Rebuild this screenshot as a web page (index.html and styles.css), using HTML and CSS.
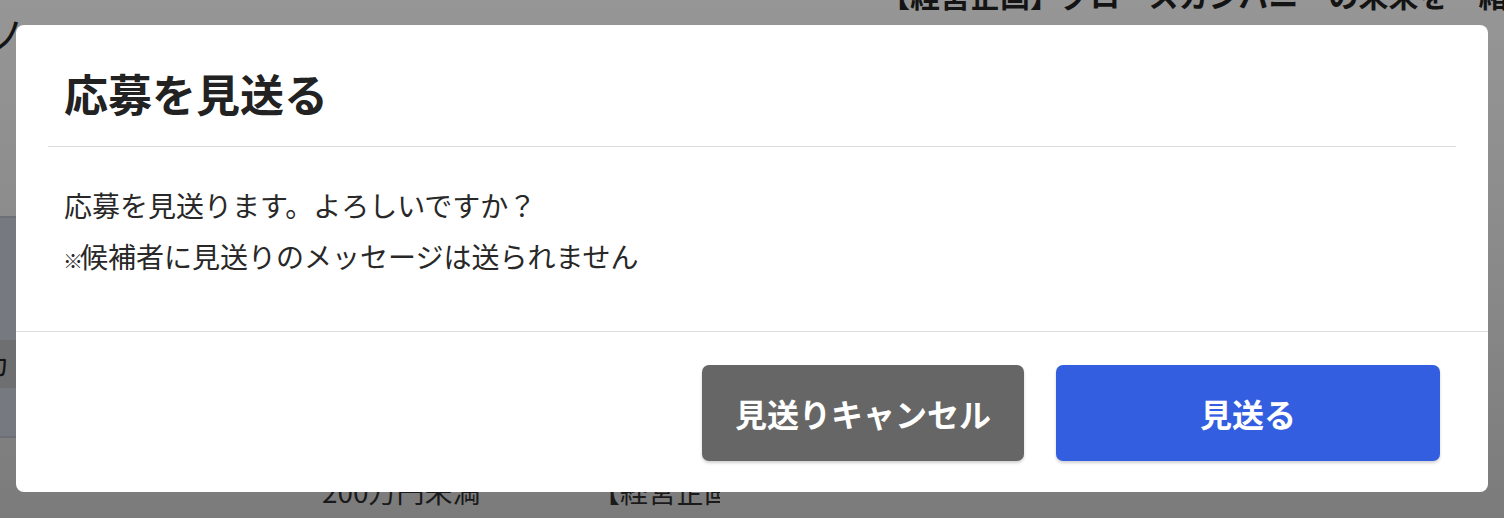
FILE: index.html
```html
<!DOCTYPE html>
<html lang="ja">
<head>
<meta charset="utf-8">
<title>応募を見送る</title>
<link rel="stylesheet" href="styles.css">
</head>
<body>
<div class="page">
  <div class="page-top">
    <span class="page-left-title">ノ</span>
    <span class="page-job-title">【経営企画】グロースカンパニーの未来を一緒に創る</span>
  </div>
  <div class="page-panel">
    <div class="panel-row">カ</div>
  </div>
  <div class="page-bottom">
    <span class="salary">200万円未満</span>
    <span class="job">【経営企画】</span>
  </div>
</div>

<div class="overlay">
  <div class="modal" role="dialog" aria-labelledby="modal-title">
    <div class="modal-header">
      <h2 id="modal-title" class="modal-title">応募を見送る</h2>
    </div>
    <div class="modal-body">
      <p class="modal-text">応募を見送ります。よろしいですか？</p>
      <p class="modal-text"><span class="note-mark">※</span>候補者に見送りのメッセージは送られません</p>
    </div>
    <div class="modal-footer">
      <button class="btn btn-cancel" type="button">見送りキャンセル</button>
      <button class="btn btn-primary" type="button">見送る</button>
    </div>
  </div>
</div>
</body>
</html>
```

FILE: styles.css
```css
* {
  box-sizing: border-box;
}

html, body {
  margin: 0;
  padding: 0;
  height: 100%;
}

body {
  width: 1504px;
  height: 518px;
  overflow: hidden;
  font-family: "Noto Sans CJK JP", "Noto Sans", sans-serif;
  background: linear-gradient(180deg, #969696 0%, #8a8a8a 50%, #7b7b7b 100%);
  color: #131313;
  position: relative;
}

/* dimmed page behind the dialog */
.page {
  height: 518px;
  display: flex;
  flex-direction: column;
}

.page-top {
  height: 216px;
  position: relative;
}

.page-left-title {
  position: absolute;
  left: -14px;
  top: 10px;
  font-size: 40px;
  line-height: 48px;
  color: #141414;
}

.page-job-title {
  position: absolute;
  left: 880px;
  top: -24px;
  font-size: 30px;
  font-weight: 700;
  line-height: 36px;
  color: #141414;
  white-space: nowrap;
}

.page-panel {
  height: 222px;
  width: 760px;
  background: #767a80;
  border-top: 2px solid #6c6f74;
  border-bottom: 2px solid #6c6f74;
  padding-top: 122px;
}

.panel-row {
  height: 48px;
  background: #6e6f70;
  font-size: 28px;
  line-height: 48px;
  margin-left: -18px;
  color: #141414;
}

.page-bottom {
  flex: 1;
  position: relative;
}

.salary {
  position: absolute;
  left: 322px;
  top: 36px;
  font-size: 28px;
  line-height: 34px;
  color: #1a1a1a;
}

.job {
  position: absolute;
  left: 592px;
  top: 36px;
  width: 128px;
  overflow: hidden;
  white-space: nowrap;
  font-size: 28px;
  line-height: 34px;
  color: #1a1a1a;
}

/* dialog */
.overlay {
  position: absolute;
  inset: 0;
  padding: 25px 16px 0;
}

.modal {
  width: 1472px;
  height: 467px;
  background: #ffffff;
  border-radius: 8px;
  display: flex;
  flex-direction: column;
  color: #222222;
}

.modal-header {
  margin: 0 32px;
  padding: 35px 16px 20px;
  border-bottom: 1px solid #dedede;
}

.modal-title {
  margin: 0;
  font-size: 44px;
  line-height: 66px;
  font-weight: 700;
  color: #222222;
}

.modal-body {
  padding: 33px 48px 0;
  height: 185px;
  border-bottom: 1px solid #dedede;
}

.modal-text {
  margin: 0;
  font-size: 28px;
  line-height: 51px;
  color: #282828;
}

.note-mark {
  font-size: 20px;
  letter-spacing: -4px;
  margin-left: -1px;
  margin-right: 1px;
  vertical-align: -1px;
}

.modal-footer {
  flex: 1;
  display: flex;
  justify-content: flex-end;
  align-items: flex-start;
  gap: 32px;
  padding: 33px 48px 0;
}

.btn {
  height: 96px;
  border: none;
  border-radius: 7px;
  font-family: "Noto Sans CJK JP", "Noto Sans", sans-serif;
  font-size: 32px;
  font-weight: 700;
  color: #ffffff;
  box-shadow: 0 2px 3px rgba(0, 0, 0, 0.18);
  cursor: pointer;
}

.btn-cancel {
  width: 322px;
  background: #666666;
}

.btn-primary {
  width: 384px;
  background: #335ee0;
}
```
